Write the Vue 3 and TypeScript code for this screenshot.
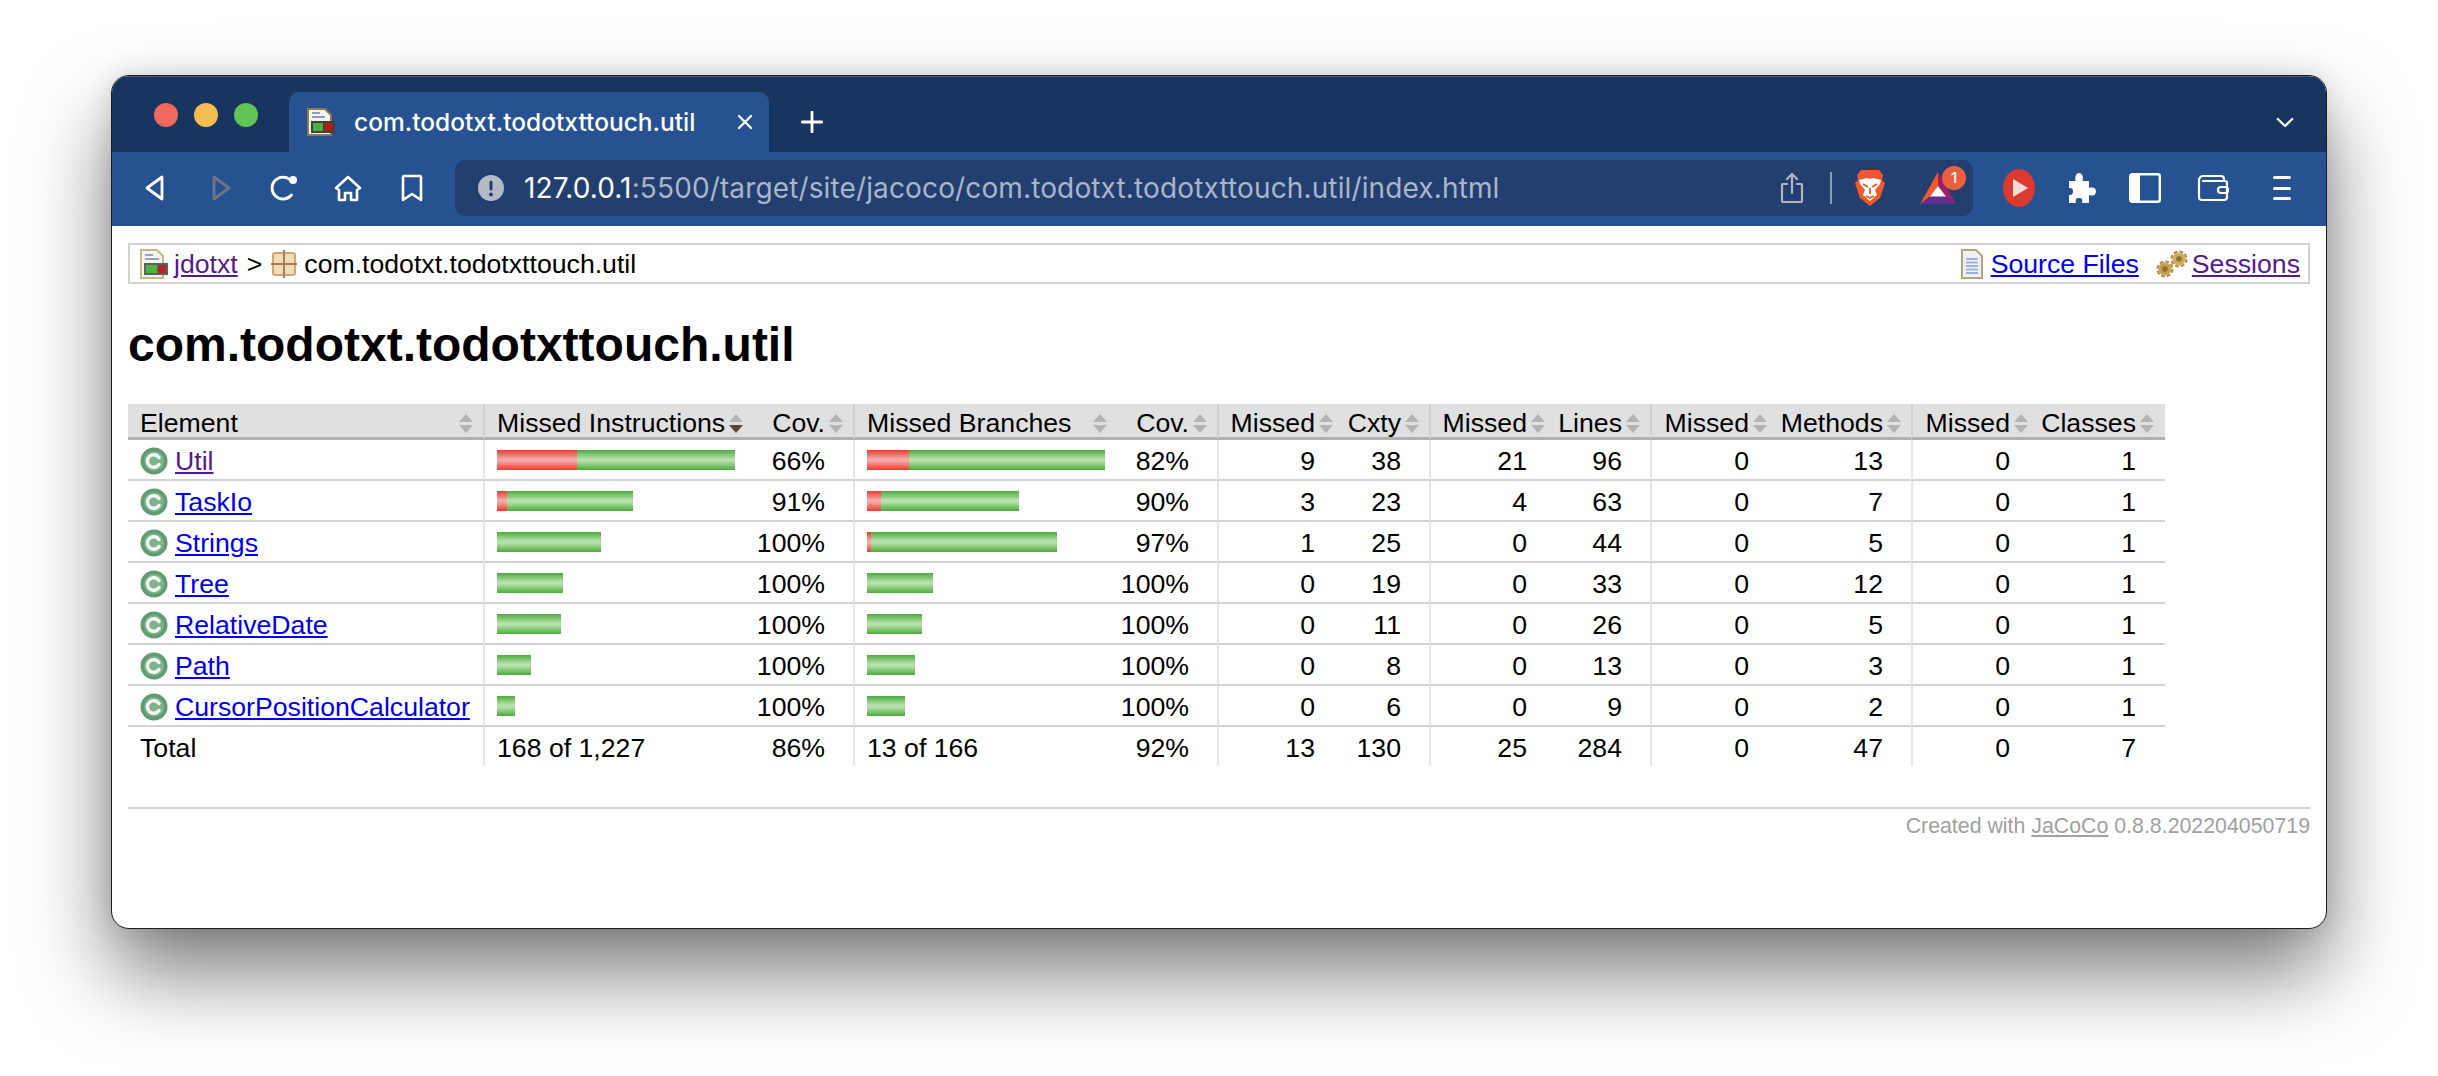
<script setup lang="ts">
// JaCoCo package report inside a browser window
interface Row {
  name: string
  visited?: boolean
  ins: [number, number]
  insCov: string
  br: [number, number]
  brCov: string
  nums: number[]
}

const rows: Row[] = [
  { name: 'Util', visited: true, ins: [80, 158], insCov: '66%', br: [42, 196], brCov: '82%', nums: [9, 38, 21, 96, 0, 13, 0, 1] },
  { name: 'TaskIo', ins: [10, 126], insCov: '91%', br: [14, 138], brCov: '90%', nums: [3, 23, 4, 63, 0, 7, 0, 1] },
  { name: 'Strings', ins: [0, 104], insCov: '100%', br: [4, 186], brCov: '97%', nums: [1, 25, 0, 44, 0, 5, 0, 1] },
  { name: 'Tree', ins: [0, 66], insCov: '100%', br: [0, 66], brCov: '100%', nums: [0, 19, 0, 33, 0, 12, 0, 1] },
  { name: 'RelativeDate', ins: [0, 64], insCov: '100%', br: [0, 55], brCov: '100%', nums: [0, 11, 0, 26, 0, 5, 0, 1] },
  { name: 'Path', ins: [0, 34], insCov: '100%', br: [0, 48], brCov: '100%', nums: [0, 8, 0, 13, 0, 3, 0, 1] },
  { name: 'CursorPositionCalculator', ins: [0, 18], insCov: '100%', br: [0, 38], brCov: '100%', nums: [0, 6, 0, 9, 0, 2, 0, 1] }
]

const totals = [13, 130, 25, 284, 0, 47, 0, 7]
const counters = ['Missed', 'Cxty', 'Missed', 'Lines', 'Missed', 'Methods', 'Missed', 'Classes']
const url = '/target/site/jacoco/com.todotxt.todotxttouch.util/index.html'
</script>

<template>
  <div class="stage">
    <div class="window">
      <!-- 标签栏 -->
      <div class="tabstrip">
        <div class="lights">
          <i class="light red" />
          <i class="light amber" />
          <i class="light green" />
        </div>
        <div class="tab">
          <svg class="favicon" viewBox="0 0 28 28">
            <path d="M1 1h17l6 6v20H1z" fill="#f6f4ec" stroke="#8f7a45" stroke-width="2" />
            <path d="M5 5h8M5 9h13" stroke="#8b9cc8" stroke-width="2" />
            <rect x="4" y="13" width="24" height="12" fill="#3f3f3f" />
            <rect x="6" y="15" width="10" height="8" fill="#4bb03c" />
            <rect x="17" y="15" width="9" height="8" fill="#a8201a" />
          </svg>
          <span class="tab-title">com.todotxt.todotxttouch.util</span>
          <svg class="tab-close" viewBox="0 0 16 16">
            <path d="M2 2l12 12M14 2L2 14" stroke="#fff" stroke-width="2.4" stroke-linecap="round" />
          </svg>
        </div>
        <svg class="newtab" viewBox="0 0 22 22">
          <path d="M11 1v20M1 11h20" stroke="#fff" stroke-width="2.8" stroke-linecap="round" />
        </svg>
        <svg class="chevron" viewBox="0 0 20 12">
          <path d="M2 2l8 8 8-8" fill="none" stroke="#fff" stroke-width="2.4" stroke-linecap="round" stroke-linejoin="round" />
        </svg>
      </div>

      <!-- 工具栏 -->
      <div class="toolbar">
        <div class="nav">
          <svg class="nav-icon" viewBox="0 0 32 32">
            <path d="M22 5v22L7 16z" fill="none" stroke="#fff" stroke-width="2.8" stroke-linejoin="round" />
          </svg>
          <svg class="nav-icon" viewBox="0 0 32 32">
            <path d="M10 5v22l15-11z" fill="none" stroke="#6f7480" stroke-width="2.8" stroke-linejoin="round" />
          </svg>
          <svg class="nav-icon" viewBox="0 0 32 32">
            <path d="M23.5 23a11 11 0 1 1-1-15" fill="none" stroke="#fff" stroke-width="2.8" stroke-linecap="round" />
            <circle cx="25" cy="8" r="4" fill="#fff" />
          </svg>
          <svg class="nav-icon" viewBox="0 0 32 32">
            <path d="M4 16L16 5l12 11-3 2v10h-6v-7h-6v7H7V18z" fill="none" stroke="#fff" stroke-width="2.6" stroke-linejoin="round" />
          </svg>
          <svg class="nav-icon" viewBox="0 0 32 32">
            <path d="M8 4h16a1 1 0 0 1 1 1v23l-9-6-9 6V5a1 1 0 0 1 1-1z" fill="none" stroke="#fff" stroke-width="2.6" stroke-linejoin="round" />
          </svg>
        </div>

        <div class="address">
          <svg class="alert" viewBox="0 0 26 26">
            <circle cx="13" cy="13" r="13" fill="#b4bac6" />
            <rect x="11.5" y="5.5" width="3" height="10" rx="1.5" fill="#223f70" />
            <circle cx="13" cy="19.5" r="1.9" fill="#223f70" />
          </svg>
          <span class="url"><span class="host">127.0.0.1</span>:5500{{ url }}</span>
          <svg class="share" viewBox="0 0 24 32">
            <path d="M7 12H3a1 1 0 0 0-1 1v16a1 1 0 0 0 1 1h18a1 1 0 0 0 1-1V13a1 1 0 0 0-1-1h-4M12 21V3M7 7l5-5 5 5" fill="none" stroke="#b2b6bc" stroke-width="2.2" stroke-linecap="round" stroke-linejoin="round" />
          </svg>
          <i class="addr-sep" />
          <svg class="brave" viewBox="0 0 32 38">
            <path d="M7 1h18l4 5-1 5 3 3-5 15-10 8-10-8L1 14l3-3-1-5z" fill="#f1592a" />
            <path d="M5 11l8-2 3 1 3-1 8 2-1 4-5 6 2 5-7 6-7-6 2-5-5-6z" fill="#fff" />
            <path d="M9 15l5 3M23 15l-5 3M16 19v6M12 27l4 2 4-2" stroke="#f1592a" stroke-width="1.8" fill="none" />
          </svg>
          <div class="bat">
            <svg viewBox="0 0 36 32">
              <path d="M18 0L0 32l10-7.500L18 15z" fill="#f1592a" />
              <path d="M18 0l18 32-10-7.500L18 15z" fill="#9e1f63" />
              <path d="M0 32h36l-10-7.500H10z" fill="#662d91" />
              <path d="M18 14l8 10.500H10z" fill="#fff" />
            </svg>
            <span class="bat-badge">1</span>
          </div>
        </div>

        <div class="actions">
          <svg class="play" viewBox="0 0 32 38">
            <ellipse cx="16" cy="19" rx="16" ry="19" fill="#dc3a30" />
            <path d="M10 10l15 9-15 9z" fill="#f6dcd8" />
          </svg>
          <svg class="puzzle" viewBox="0 0 30 32">
            <path d="M3 9h6.5C8.500 3 11 1 13 1s5 2 3.500 8H23v7c5-1.500 7 .5 7 3.500s-2 5-7 3.500v8H16c1-4-.5-5-3-5s-4 1-3 5H3v-8c3 .5 4-1 4-3.500S6 15.500 3 16z" fill="#fff" />
          </svg>
          <svg class="panel" viewBox="0 0 32 30">
            <rect x="1.200" y="1.200" width="29.600" height="27.600" rx="2" fill="none" stroke="#fff" stroke-width="2.400" />
            <rect x="1" y="1" width="10" height="28" fill="#fff" />
          </svg>
          <svg class="wallet" viewBox="0 0 32 28">
            <path d="M6 2h18a3 3 0 0 1 3 3v2M2 6a4 4 0 0 1 4-4M2 6v17a3 3 0 0 0 3 3h22a3 3 0 0 0 3-3V9a2 2 0 0 0-2-2H6" fill="none" stroke="#fff" stroke-width="2.200" stroke-linecap="round" />
            <rect x="21" y="13" width="10" height="6" rx="3" fill="none" stroke="#fff" stroke-width="2.200" />
          </svg>
          <div class="menu"><i /><i /><i /></div>
        </div>
      </div>

      <!-- 报告页面 -->
      <div class="page">
        <div class="breadcrumb">
          <svg class="ic-report" viewBox="0 0 28 30">
            <path d="M1 1h16l6 6v22H1z" fill="#f7f5ea" stroke="#c4b88c" stroke-width="2" />
            <path d="M5 6h8M5 10h14" stroke="#8fa3cc" stroke-width="1.800" />
            <rect x="4" y="14" width="24" height="12" fill="#5c6168" />
            <rect x="6" y="16" width="11" height="8" fill="#4cb53f" />
            <rect x="18" y="16" width="8" height="8" fill="#ac2a22" />
          </svg>
          <a class="visited">jdotxt</a>
          <span class="gt">&gt;</span>
          <svg class="ic-package" viewBox="0 0 26 28">
            <rect x="2" y="3" width="22" height="22" rx="2" fill="#f0dcb4" stroke="#cfa477" stroke-width="2" />
            <path d="M13 0v28M0 14h26" stroke="#a87c58" stroke-width="2" />
          </svg>
          <span class="pkg">com.todotxt.todotxttouch.util</span>
          <div class="info">
            <svg class="ic-source" viewBox="0 0 22 30">
              <path d="M1 1h14l6 6v22H1z" fill="#eef1f6" stroke="#b3a67c" stroke-width="2" />
              <path d="M5 10h12M5 13.500h12M5 17h12M5 20.500h12M5 24h12" stroke="#9fb1d8" stroke-width="1.800" />
            </svg>
            <a>Source Files</a>
            <svg class="ic-session" viewBox="0 0 32 28">
              <circle cx="9" cy="19" r="7.500" fill="none" stroke="#a98a4c" stroke-width="2" stroke-dasharray="4 1.900" />
              <circle cx="9" cy="19" r="6.500" fill="#c9a04a" />
              <circle cx="9" cy="19" r="2.800" fill="#8a7040" />
              <circle cx="23" cy="9" r="7.500" fill="none" stroke="#a98a4c" stroke-width="2" stroke-dasharray="4 1.900" />
              <circle cx="23" cy="9" r="6.500" fill="#d3ac58" />
              <circle cx="23" cy="9" r="2.800" fill="#8a7040" />
            </svg>
            <a class="visited">Sessions</a>
          </div>
        </div>

        <h1>com.todotxt.todotxttouch.util</h1>

        <table class="coverage">
          <colgroup>
            <col class="c-el" /><col class="c-bar1" /><col class="c-cov1" /><col class="c-bar2" /><col class="c-cov2" />
            <col class="c-m1" /><col class="c-v1" /><col class="c-m2" /><col class="c-v2" />
            <col class="c-m3" /><col class="c-v3" /><col class="c-m4" /><col class="c-v4" />
          </colgroup>
          <thead>
            <tr>
              <th><div class="th-in spread">Element<i class="sort" /></div></th>
              <th class="sep"><div class="th-in spread">Missed Instructions<i class="sort active" /></div></th>
              <th><div class="th-in">Cov.<i class="sort" /></div></th>
              <th class="sep"><div class="th-in spread">Missed Branches<i class="sort" /></div></th>
              <th><div class="th-in">Cov.<i class="sort" /></div></th>
              <th v-for="(c, i) in counters" :key="i" :class="{ sep: i % 2 === 0 }">
                <div class="th-in">{{ c }}<i class="sort" /></div>
              </th>
            </tr>
          </thead>
          <tbody>
            <tr v-for="r in rows" :key="r.name">
              <td class="el">
                <div class="el-in">
                  <svg class="ic-class" viewBox="0 0 28 28">
                    <circle cx="14" cy="14" r="13.500" fill="#5f9c72" />
                    <circle cx="14" cy="14" r="10" fill="#7fb28d" />
                    <path d="M19 10.500a6.300 6.300 0 1 0 0 7" fill="none" stroke="#f4f8f4" stroke-width="3.400" stroke-linecap="round" />
                  </svg>
                  <a :class="{ visited: r.visited }">{{ r.name }}</a>
                </div>
              </td>
              <td class="sep bar">
                <div class="bars">
                  <i v-if="r.ins[0]" class="bar-red" :style="{ width: r.ins[0] + 'px' }" />
                  <i class="bar-green" :style="{ width: r.ins[1] + 'px' }" />
                </div>
              </td>
              <td class="num">{{ r.insCov }}</td>
              <td class="sep bar">
                <div class="bars">
                  <i v-if="r.br[0]" class="bar-red" :style="{ width: r.br[0] + 'px' }" />
                  <i class="bar-green" :style="{ width: r.br[1] + 'px' }" />
                </div>
              </td>
              <td class="num">{{ r.brCov }}</td>
              <td v-for="(n, i) in r.nums" :key="i" class="num" :class="{ sep: i % 2 === 0 }">{{ n }}</td>
            </tr>
          </tbody>
          <tfoot>
            <tr>
              <td class="el">Total</td>
              <td class="sep bar">168 of 1,227</td>
              <td class="num">86%</td>
              <td class="sep bar">13 of 166</td>
              <td class="num">92%</td>
              <td v-for="(n, i) in totals" :key="i" class="num" :class="{ sep: i % 2 === 0 }">{{ n }}</td>
            </tr>
          </tfoot>
        </table>

        <div class="footer">Created with <a>JaCoCo</a> 0.8.8.202204050719</div>
      </div>
    </div>
  </div>
</template>

<style scoped>
.stage {
  width: 2438px;
  height: 1076px;
  box-sizing: border-box;
  padding: 75px 111px 0 111px;
  background: #fff;
}

.window {
  height: 854px;
  box-sizing: border-box;
  border: 1px solid #1c1c1e;
  border-radius: 18px;
  overflow: hidden;
  background: #fff;
  box-shadow: 0 44px 84px rgba(0, 0, 0, 0.52), 0 0 26px rgba(0, 0, 0, 0.12);
  display: flex;
  flex-direction: column;
}

.tabstrip {
  height: 76px;
  box-sizing: border-box;
  padding: 16px 0 0 42px;
  background: #18355f;
  display: flex;
  align-items: flex-start;
  box-shadow: inset 0 1px 0 rgba(255, 255, 255, 0.22);
}

.lights {
  display: flex;
  gap: 16px;
  margin-top: 11px;
  width: 135px;
  flex-shrink: 0;
}

.light {
  width: 24px;
  height: 24px;
  border-radius: 50%;
}

.red { background: #ee6a5f; }
.amber { background: #f5bd4f; }
.green { background: #61c454; }

.tab {
  width: 480px;
  height: 60px;
  box-sizing: border-box;
  padding: 0 16px 0 18px;
  background: #265292;
  border-radius: 10px 10px 0 0;
  display: flex;
  align-items: center;
  color: #fff;
}

.favicon {
  width: 28px;
  height: 28px;
  flex-shrink: 0;
}

.tab-title {
  margin-left: 19px;
  font: 500 24.5px Inter, "Liberation Sans", sans-serif;
  white-space: nowrap;
  flex: 1;
}

.tab-close {
  width: 16px;
  height: 16px;
  flex-shrink: 0;
}

.newtab {
  width: 22px;
  height: 22px;
  margin: 19px 0 0 32px;
}

.chevron {
  width: 18px;
  height: 11px;
  margin: 25px 32px 0 auto;
}

.toolbar {
  height: 74px;
  box-sizing: border-box;
  padding: 8px 0 10px 28px;
  background: #265292;
  display: flex;
  align-items: center;
}

.nav {
  display: flex;
  gap: 32px;
  width: 315px;
  flex-shrink: 0;
}

.nav-icon {
  width: 32px;
  height: 32px;
}

.address {
  width: 1518px;
  height: 56px;
  box-sizing: border-box;
  padding: 0 14px 0 23px;
  border-radius: 10px;
  background: #223f70;
  display: flex;
  align-items: center;
  flex-shrink: 0;
}

.alert {
  width: 26px;
  height: 26px;
  flex-shrink: 0;
}

.url {
  margin-left: 20px;
  font: 400 28px Inter, "Liberation Sans", sans-serif;
  letter-spacing: 0.13px;
  color: #a9b5ca;
  white-space: nowrap;
  flex: 1;
}

.host {
  color: #fff;
}

.share {
  width: 24px;
  height: 32px;
  flex-shrink: 0;
}

.addr-sep {
  width: 2px;
  height: 32px;
  margin-left: 26px;
  background: #8d9bb3;
  flex-shrink: 0;
}

.brave {
  width: 32px;
  height: 38px;
  margin-left: 22px;
  flex-shrink: 0;
}

.bat {
  position: relative;
  width: 36px;
  height: 32px;
  margin-left: 34px;
  margin-right: 3px;
  flex-shrink: 0;
}

.bat svg {
  display: block;
  width: 36px;
  height: 32px;
}

.bat-badge {
  position: absolute;
  top: -6px;
  left: 22px;
  width: 24px;
  height: 24px;
  border-radius: 50%;
  background: #e9603e;
  color: #fff;
  font: 500 15px/24px Inter, "Liberation Sans", sans-serif;
  text-align: center;
}

.actions {
  display: flex;
  align-items: center;
  margin-left: 30px;
}

.play { width: 32px; height: 38px; }
.puzzle { width: 30px; height: 32px; margin-left: 31px; }
.panel { width: 32px; height: 30px; margin-left: 33px; }
.wallet { width: 32px; height: 28px; margin-left: 36px; }

.menu {
  width: 18px;
  height: 24px;
  margin-left: 44px;
  display: flex;
  flex-direction: column;
  justify-content: space-between;
}

.menu i {
  height: 3px;
  background: #fff;
  border-radius: 2px;
}

.page {
  flex: 1;
  padding: 17px 16px 0 16px;
  font: 26.67px "Liberation Sans", Arial, sans-serif;
  color: #000;
}

a {
  color: #0000ee;
  text-decoration: underline;
}

a.visited {
  color: #551a8b;
}

.breadcrumb {
  height: 41px;
  box-sizing: border-box;
  border: 2px solid #d6d3ce;
  padding: 2px 8px 0 10px;
  display: flex;
  align-items: center;
}

.ic-report { width: 28px; height: 30px; margin-right: 6px; margin-top: -2px; }
.gt { margin: 0 9px; }
.ic-package { width: 26px; height: 28px; margin-right: 7px; margin-top: -2px; }

.info {
  margin-left: auto;
  display: flex;
  align-items: center;
}

.ic-source { width: 22px; height: 30px; margin-right: 8px; margin-top: -2px; }
.ic-session { width: 32px; height: 28px; margin: -2px 4px 0 17px; }

h1 {
  margin: 34px 0 32px;
  font: bold 48px/54px "Liberation Sans", Arial, sans-serif;
}

.coverage {
  width: 2037px;
  table-layout: fixed;
  border-collapse: separate;
  border-spacing: 0;
}

.c-el { width: 355px; }
.c-bar1 { width: 270px; }
.c-cov1 { width: 100px; }
.c-bar2 { width: 264px; }
.c-cov2 { width: 100px; }
.c-m1 { width: 126px; }
.c-v1 { width: 86px; }
.c-m2 { width: 126px; }
.c-v2 { width: 95px; }
.c-m3 { width: 127px; }
.c-v3 { width: 134px; }
.c-m4 { width: 127px; }
.c-v4 { width: 127px; }

th {
  height: 36px;
  box-sizing: border-box;
  padding: 5px 9px 0 12px;
  background: #e0e0e0;
  border-bottom: 3px solid #b0b0b0;
  font-weight: normal;
  text-align: left;
  white-space: nowrap;
}

th:last-child {
  padding-right: 10px;
}

th.sep {
  border-left: 2px solid #cfcfcf;
}

.th-in {
  display: flex;
  align-items: center;
  justify-content: flex-end;
  gap: 4px;
  line-height: 28px;
}

.th-in.spread {
  justify-content: space-between;
}

.sort {
  width: 14px;
  height: 19px;
  margin-right: 1px;
  flex-shrink: 0;
  display: flex;
  flex-direction: column;
  justify-content: space-between;
}

.sort::before,
.sort::after {
  content: "";
  border-left: 7px solid transparent;
  border-right: 7px solid transparent;
}

.sort::before {
  border-bottom: 8.5px solid #b4b4b4;
}

.sort::after {
  border-top: 8.5px solid #b4b4b4;
}

.sort.active::after {
  border-top-color: #54483e;
}

td {
  height: 41px;
  box-sizing: border-box;
  padding: 3px 28px 0 12px;
  border-bottom: 2px solid #d6d3ce;
  white-space: nowrap;
}

td:last-child {
  padding-right: 29px;
}

tfoot td {
  height: 39px;
  border-bottom: none;
}

td.sep {
  border-left: 2px solid #e6e6e6;
}

td.num {
  padding-left: 0;
  text-align: right;
}

td.bar {
  padding-right: 0;
}

.el-in {
  display: flex;
  align-items: center;
  gap: 7px;
}

.ic-class {
  width: 28px;
  height: 28px;
  flex-shrink: 0;
}

.bars {
  display: flex;
  height: 20px;
  margin-top: -2px;
}

.bars i {
  display: block;
  height: 20px;
}

.bar-red {
  background: linear-gradient(#ee3a2e, #f6a9a9 45%, #f6a9a9 55%, #ee3a2e);
}

.bar-green {
  background: linear-gradient(#4cab3a, #b7e0ad 45%, #b7e0ad 55%, #4cab3a);
}

.footer {
  margin-top: 41px;
  border-top: 2px solid #d6d3ce;
  padding-top: 5px;
  text-align: right;
  font-size: 21.33px;
  color: #a0a0a0;
}

.footer a {
  color: #a0a0a0;
}
</style>

<style>
html,
body {
  margin: 0;
  background: #fff;
  overflow: hidden;
}
</style>
